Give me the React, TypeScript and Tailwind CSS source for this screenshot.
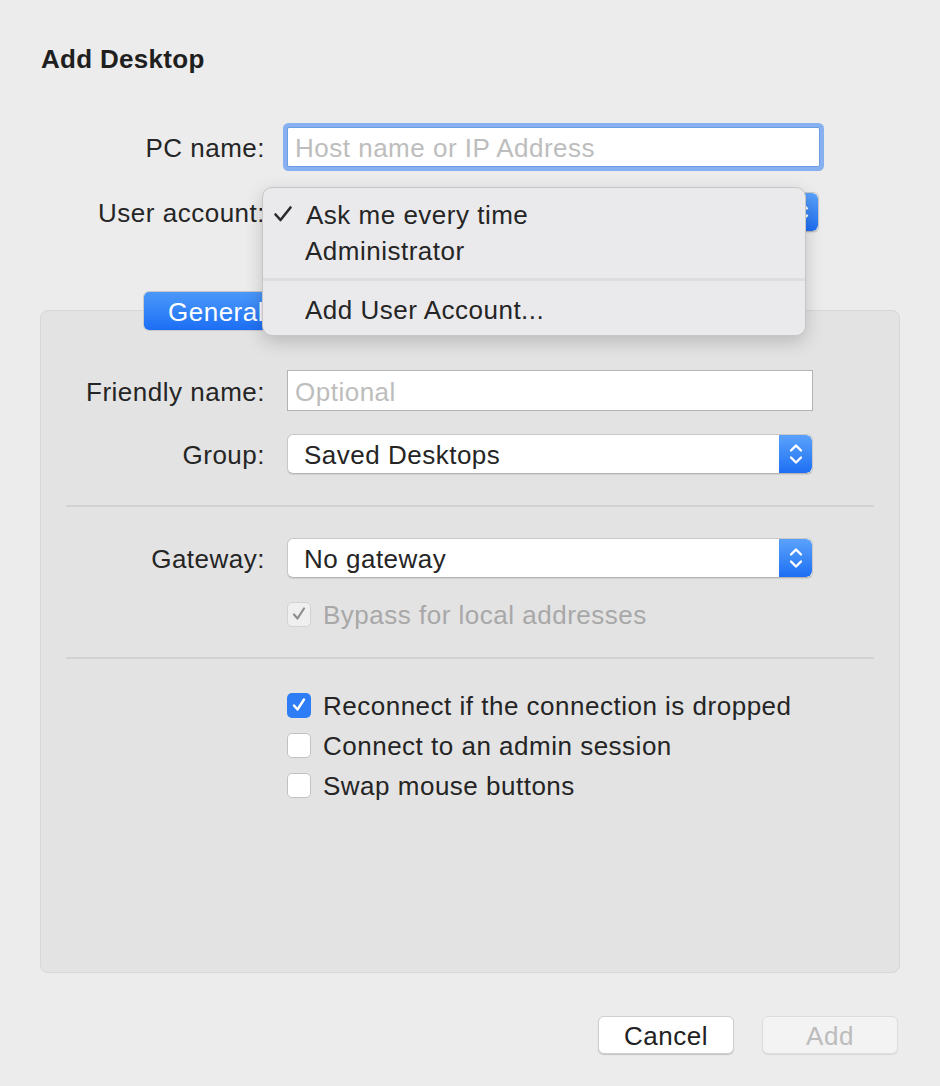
import React from "react";

function Stepper() {
  return (
    <div className="w-[33px] h-full rounded-r-[6px] bg-gradient-to-b from-[#5aa2fa] to-[#1d6ef4] flex items-center justify-center">
      <svg width="16" height="26" viewBox="0 0 16 26" fill="none" stroke="white" strokeWidth="2.4" strokeLinecap="round" strokeLinejoin="round">
        <path d="M3 9.5 L8 4.5 L13 9.5" />
        <path d="M3 16.5 L8 21.5 L13 16.5" />
      </svg>
    </div>
  );
}

function PopUp({ value, width }: { value?: string; width: string }) {
  return (
    <div className={`${width} h-[40px] flex bg-white rounded-[6px] border border-[#c8c8c8] border-b-[#b4b4b4] shadow-[0_1px_1px_rgba(0,0,0,0.08)] overflow-hidden`}>
      <div className="flex-1 flex items-center pl-[16px] pt-[3px] text-[#252525]">{value}</div>
      <Stepper />
    </div>
  );
}

function Check({ checked, disabled }: { checked?: boolean; disabled?: boolean }) {
  if (checked && !disabled) {
    return (
      <div className="w-[24px] h-[25px] rounded-[5px] bg-[#2f7df6] flex items-center justify-center">
        <svg width="18" height="18" viewBox="0 0 18 18" fill="none" stroke="white" strokeWidth="2.4" strokeLinecap="round" strokeLinejoin="round">
          <path d="M4 9.5 L7.5 13.5 L14 3.5" />
        </svg>
      </div>
    );
  }
  return (
    <div className={`w-[24px] h-[25px] rounded-[5px] border flex items-center justify-center ${disabled ? "bg-[#efefef] border-[#d2d2d2]" : "bg-white border-[#c2c2c2]"}`}>
      {checked && (
        <svg width="18" height="18" viewBox="0 0 18 18" fill="none" stroke="#8e8e8e" strokeWidth="2.2" strokeLinecap="round" strokeLinejoin="round">
          <path d="M4 9.5 L7.5 13.5 L14 3.5" />
        </svg>
      )}
    </div>
  );
}

function CheckRow({ label, checked, disabled }: { label: string; checked?: boolean; disabled?: boolean }) {
  return (
    <div className="flex items-center gap-[12px] pl-[246px] h-[40px]">
      <Check checked={checked} disabled={disabled} />
      <span className={`pt-[3px] ${disabled ? "text-[#a8a8a8]" : "text-[#252525]"}`}>{label}</span>
    </div>
  );
}

export default function App() {
  return (
    <div className="relative w-[940px] h-[1086px] bg-[#ececec] text-[26px] tracking-[0.5px] text-[#252525] font-['Liberation_Sans',Arial,sans-serif] overflow-hidden">
      <div className="px-[40px] pt-[43px]">
        <h1 className="pl-[1px] font-bold tracking-[0.3px] leading-[32px] text-[#1f1f1f]">Add Desktop</h1>

        {/* PC name */}
        <div className="flex items-center gap-[22px] mt-[52px] h-[40px]">
          <div className="w-[225px] text-right pt-[3px]">PC name:</div>
          <div className="w-[533px] h-[40px] bg-white border border-[#6c9ce6] rounded-[2px] shadow-[0_0_0_4px_#86b0ef] flex items-center pl-[7px] pt-[3px] text-[#bdbdbd]">
            Host name or IP Address
          </div>
        </div>

        {/* User account */}
        <div className="flex items-center gap-[22px] mt-[25px] h-[39px]">
          <div className="w-[225px] text-right pt-[3px]">User account:</div>
          <PopUp width="w-[532px]" />
        </div>

        {/* Tabs */}
        <div className="relative z-10 mt-[60px] h-[40px] pl-[103px] flex">
          <div className="flex h-[40px] w-[654px] rounded-[6px] bg-white border border-[#c8c8c8] overflow-hidden">
            <div className="h-full px-[24px] flex items-center pt-[2px] bg-gradient-to-b from-[#4b98f9] to-[#1c6ef5] text-white">General</div>
            <div className="h-full flex-1" />
          </div>
        </div>

        {/* Group box */}
        <div className="-mt-[21px] h-[663px] bg-[#e3e3e3] border border-[#d7d7d7] rounded-[8px] pt-[59px]">
          <div className="flex items-center gap-[22px] h-[41px]">
            <div className="w-[224px] text-right pt-[3px]">Friendly name:</div>
            <div className="w-[526px] h-[41px] bg-white border border-[#b3b3b3] flex items-center pl-[7px] pt-[3px] text-[#bdbdbd]">Optional</div>
          </div>

          <div className="flex items-center gap-[22px] h-[40px] mt-[23px]">
            <div className="w-[224px] text-right pt-[3px]">Group:</div>
            <PopUp value="Saved Desktops" width="w-[526px]" />
          </div>

          <div className="mx-[25px] mt-[31px] h-[2px] bg-[#d2d2d2]" />

          <div className="flex items-center gap-[22px] h-[40px] mt-[31px]">
            <div className="w-[224px] text-right pt-[3px]">Gateway:</div>
            <PopUp value="No gateway" width="w-[526px]" />
          </div>

          <div className="mt-[16px]">
            <CheckRow label="Bypass for local addresses" checked disabled />
          </div>

          <div className="mx-[25px] mt-[23px] h-[2px] bg-[#d2d2d2]" />

          <div className="mt-[26px]">
            <CheckRow label="Reconnect if the connection is dropped" checked />
            <CheckRow label="Connect to an admin session" />
            <CheckRow label="Swap mouse buttons" />
          </div>
        </div>

        {/* Buttons */}
        <div className="flex justify-end gap-[28px] mt-[43px] pr-[2px]">
          <div className="w-[136px] h-[38px] rounded-[6px] bg-white border border-[#cfcfcf] shadow-[0_1px_1px_rgba(0,0,0,0.18)] flex items-center justify-center pt-[2px] text-[#222]">Cancel</div>
          <div className="w-[136px] h-[38px] rounded-[6px] bg-[#f3f3f3] border border-[#dcdcdc] shadow-[0_1px_1px_rgba(0,0,0,0.08)] flex items-center justify-center pt-[2px] text-[#bcbcbc]">Add</div>
        </div>
      </div>

      {/* Open popup menu */}
      <div className="absolute left-[262px] top-[187px] w-[544px] h-[149px] z-20 rounded-[10px] bg-[#eaeaec] border border-[#c6c6c6] shadow-[0_6px_18px_rgba(0,0,0,0.18)] pt-[8px]">
        <div className="flex items-center h-[36px]">
          <div className="w-[43px] flex justify-end pr-[13px]">
            <svg width="20" height="18" viewBox="0 0 20 18" fill="none" stroke="#2a2a2a" strokeWidth="2.6" strokeLinecap="round" strokeLinejoin="round">
              <path d="M2.5 9.5 L7.5 15 L17.5 2.5" />
            </svg>
          </div>
          <span className="pt-[2px]">Ask me every time</span>
        </div>
        <div className="flex items-center h-[36px] pl-[42px] pt-[2px]">Administrator</div>
        <div className="mt-[10px] h-[3px] bg-[#dddddf]" />
        <div className="flex items-center h-[36px] pl-[42px] mt-[10px] pt-[2px]">Add User Account...</div>
      </div>
    </div>
  );
}
